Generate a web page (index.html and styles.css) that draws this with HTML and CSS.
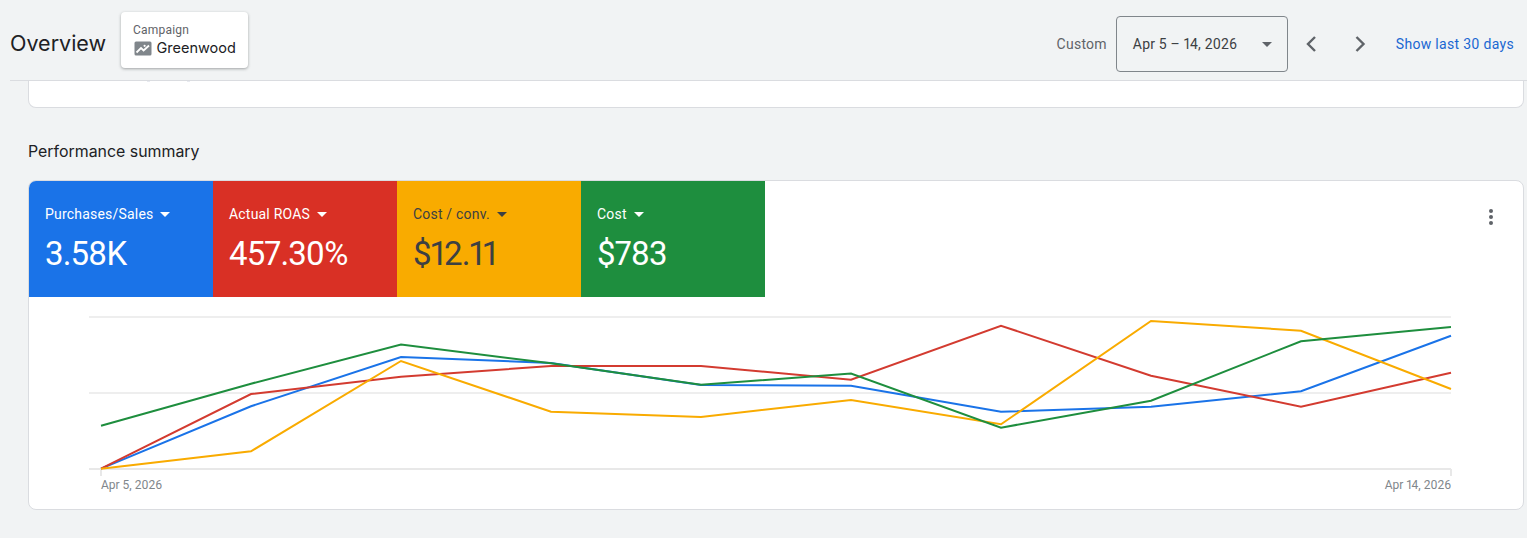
FILE: index.html
```html
<!DOCTYPE html>
<html lang="en">
<head>
<meta charset="utf-8">
<title>Overview</title>
<link rel="stylesheet" href="styles.css">
</head>
<body>
<header class="topbar">
  <h1 class="page-title">Overview</h1>
  <div class="campaign-chip">
    <span class="chip-label">Campaign</span>
    <span class="chip-value">
      <svg class="chip-icon" width="18" height="15" viewBox="0 0 18 15"><rect x="0.5" y="0.5" width="17" height="14" rx="1.5" fill="#80868b"/><path d="M2.5 11.5 L7 7 L9.6 9.5 L15 4.5" fill="none" stroke="#fff" stroke-width="1.8"/><circle cx="10.6" cy="4.8" r="1.1" fill="#fff"/></svg>
      Greenwood
    </span>
  </div>
  <div class="date-controls">
    <span class="date-mode">Custom</span>
    <button class="date-select"><span>Apr 5 – 14, 2026</span><i class="caret caret-dark"></i></button>
    <svg class="chevron" width="24" height="24" viewBox="0 0 24 24"><path d="M17 5 L10 12 L17 19" fill="none" stroke="#5f6368" stroke-width="2.4"/></svg>
    <svg class="chevron chevron-next" width="24" height="24" viewBox="0 0 24 24"><path d="M7.5 5 L14.5 12 L7.5 19" fill="none" stroke="#5f6368" stroke-width="2.4"/></svg>
    <a class="range-link" href="#">Show last 30 days</a>
  </div>
</header>
<main class="content">
  <div class="clipped-card"></div>
  <h2 class="section-title">Performance summary</h2>
  <section class="summary-card">
    <div class="tile-row">
      <div class="tile tile-blue"><div class="tile-label">Purchases/Sales<i class="caret"></i></div><div class="tile-value">3.58K</div></div>
      <div class="tile tile-red"><div class="tile-label">Actual ROAS<i class="caret"></i></div><div class="tile-value">457.30%</div></div>
      <div class="tile tile-yellow"><div class="tile-label">Cost / conv.<i class="caret"></i></div><div class="tile-value">$12.11</div></div>
      <div class="tile tile-green"><div class="tile-label">Cost<i class="caret"></i></div><div class="tile-value">$783</div></div>
      <div class="kebab"><b></b><b></b><b></b></div>
    </div>
    <svg class="chart" width="1495" height="180" viewBox="29 297 1495 180">
      <g stroke="#eeeeee" stroke-width="2" fill="none">
        <path d="M89 317H1451"/>
        <path d="M89 393H1451"/>
      </g>
      <g stroke="#e8e8e8" stroke-width="2" fill="none">
        <path d="M89 469H1451"/>
        <path d="M101 469V476M1451 469V476"/>
      </g>
      <g fill="none" stroke-width="2" stroke-linejoin="miter">
        <polyline stroke="#1a73e8" points="101,468.7 251,406.3 401,357 551,363 701,385 851,385.7 1001,411.7 1151,406.7 1301,391.3 1451,335.7"/>
        <polyline stroke="#d33b30" points="101,468.7 251,394 401,376.7 551,366 701,366 851,379.7 1001,325.7 1151,375.7 1301,406.7 1451,372.7"/>
        <polyline stroke="#f9ab00" points="101,468.7 251,451.3 401,361 551,411.7 701,417 851,400 1001,424.3 1151,321 1301,330.7 1451,389"/>
        <polyline stroke="#1e8e3e" points="101,425.7 251,383.7 401,344.5 551,363.3 701,384.7 851,373.5 1001,427.7 1151,400.7 1301,341.2 1451,327"/>
      </g>
    </svg>
    <div class="axis-labels"><span>Apr 5, 2026</span><span>Apr 14, 2026</span></div>
  </section>
</main>
</body>
</html>
```
FILE: styles.css
```css
* { box-sizing: border-box; }
html, body { margin: 0; height: 538px; overflow: hidden; }
body { background: #f1f3f4; font-family: Roboto, "Liberation Sans", sans-serif; color: #202124; font-variant-numeric: proportional-nums; }

.topbar { display: flex; align-items: center; height: 81px; margin-left: 10px; border-bottom: 1px solid #dadce0; }
.page-title { margin: 0 16px 0 0; font: 400 21.5px/28px Inter, Roboto, sans-serif; color: #202124; position: relative; top: 3px; width: 95px; white-space: nowrap; }
.campaign-chip { display: flex; flex-direction: column; width: 127px; height: 56px; padding: 10px 12px 0; background: #fff; border-radius: 4px; box-shadow: 0 1px 3px rgba(60,64,67,.45); }
.chip-label { font-size: 12px; line-height: 16px; color: #5f6368; letter-spacing: 0.2px; }
.chip-value { display: flex; align-items: center; gap: 5px; font: 400 14.5px/20px Inter, Roboto, sans-serif; color: #202124; }
.chip-icon { flex: none; margin-left: 0.5px; }

.date-controls { display: flex; align-items: center; margin-left: auto; padding: 8px 13px 0 0; }
.date-mode { font-size: 14px; color: #5f6368; letter-spacing: 0.25px; margin-right: 9px; }
.date-select { display: flex; align-items: center; justify-content: space-between; width: 172px; height: 56px; padding: 0 15px 0 16px; background: transparent; border: 1px solid #80868b; border-radius: 4px; font: 400 14px Roboto, sans-serif; color: #3c4043; letter-spacing: 0.2px; font-variant-numeric: proportional-nums; }
.caret { display: inline-block; width: 0; height: 0; border-left: 5.5px solid transparent; border-right: 5.5px solid transparent; border-top: 5px solid #fff; margin-left: 7px; vertical-align: 2px; }
.caret-dark { border-top-color: #5f6368; }
.chevron { margin-left: 10px; }
.chevron-next { margin-left: 27px; }
.range-link { margin-left: 23px; font-size: 14px; font-weight: 400; color: #1967d2; text-decoration: none; letter-spacing: 0.3px; white-space: nowrap; }

.content { padding: 0 3px 0 28px; }
.clipped-card {
  height: 27px;
  background-color: #fff;
  background-image: linear-gradient(#e8eaf0, #e8eaf0), linear-gradient(#e8eaf0, #e8eaf0);
  background-size: 3px 1px, 3px 1px;
  background-position: 118px 0, 158px 0;
  background-repeat: no-repeat;
  border: 1px solid #dadce0;
  border-top: 0;
  border-radius: 0 0 8px 8px;
}
.section-title { margin: 34px 0 18px; font: 400 15.9px/20px Inter, Roboto, sans-serif; color: #202124; }
.summary-card { height: 330px; background: #fff; border: 1px solid #dadce0; border-radius: 8px; overflow: hidden; }

.tile-row { display: flex; height: 116px; }
.tile { width: 184px; height: 116px; padding: 23px 16px 0; color: #fff; }
.tile-blue { background: #1a73e8; }
.tile-red { background: #d93025; }
.tile-yellow { background: #f9ab00; color: #3c4043; }
.tile-yellow .caret { border-top-color: #3c4043; }
.tile-green { background: #1e8e3e; }
.tile-label { font-size: 14px; line-height: 20px; letter-spacing: 0.2px; }
.tile-value { margin-top: 10px; font-size: 33px; line-height: 40px; letter-spacing: -0.9px; }
.kebab { display: flex; flex-direction: column; gap: 2px; margin: 28px 30px 0 auto; }
.kebab b { width: 4px; height: 4px; border-radius: 50%; background: #5f6368; }

.chart { display: block; }
.axis-labels { display: flex; justify-content: space-between; padding: 1px 72px 0; font-size: 12px; line-height: 14px; color: #80868b; }
```
